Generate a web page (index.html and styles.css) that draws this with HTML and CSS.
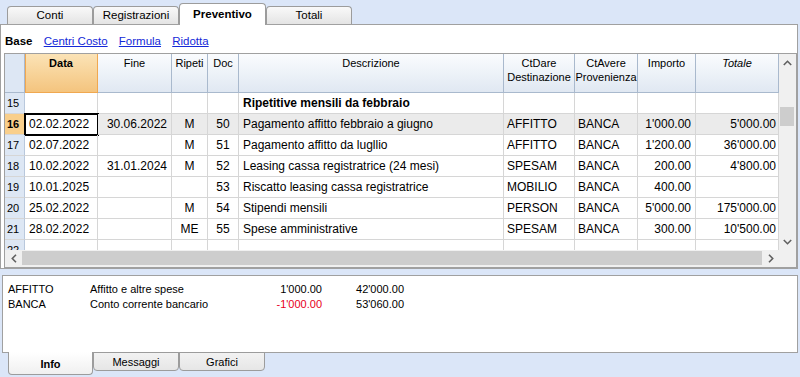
FILE: index.html
```html
<!DOCTYPE html>
<html lang="it">
<head>
    <meta charset="UTF-8">
    <title>Preventivo</title>
    <link rel="stylesheet" href="styles.css">
</head>
<body>

    <div class="top-tabs">
        <div class="tab">Conti</div>
        <div class="tab">Registrazioni</div>
        <div class="tab active">Preventivo</div>
        <div class="tab">Totali</div>
    </div>

    <div class="main">
        <div class="subnav">
            <b>Base</b>
            <a href="#">Centri Costo</a>
            <a href="#">Formula</a>
            <a href="#">Ridotta</a>
        </div>

        <div class="grid">
            <div class="grid-body">
                <div class="viewport">
                    <div class="row head">
                        <div class="c h num"></div>
                        <div class="c h sel-col"><b>Data</b></div>
                        <div class="c h">Fine</div>
                        <div class="c h">Ripeti</div>
                        <div class="c h">Doc</div>
                        <div class="c h">Descrizione</div>
                        <div class="c h">CtDare<br>Destinazione</div>
                        <div class="c h">CtAvere<br>Provenienza</div>
                        <div class="c h">Importo</div>
                        <div class="c h"><i>Totale</i></div>
                    </div>

                    <div class="row">
                        <div class="c num">15</div>
                        <div class="c"></div>
                        <div class="c"></div>
                        <div class="c"></div>
                        <div class="c"></div>
                        <div class="c"><b>Ripetitive mensili da febbraio</b></div>
                        <div class="c"></div>
                        <div class="c"></div>
                        <div class="c"></div>
                        <div class="c"></div>
                    </div>

                    <div class="row sel">
                        <div class="c num">16</div>
                        <div class="c cur">02.02.2022</div>
                        <div class="c right">30.06.2022</div>
                        <div class="c mid">M</div>
                        <div class="c mid">50</div>
                        <div class="c">Pagamento affitto febbraio a giugno</div>
                        <div class="c acc">AFFITTO</div>
                        <div class="c acc">BANCA</div>
                        <div class="c right">1'000.00</div>
                        <div class="c right tot">5'000.00</div>
                    </div>

                    <div class="row">
                        <div class="c num">17</div>
                        <div class="c">02.07.2022</div>
                        <div class="c right"></div>
                        <div class="c mid">M</div>
                        <div class="c mid">51</div>
                        <div class="c">Pagamento affitto da lugllio</div>
                        <div class="c acc">AFFITTO</div>
                        <div class="c acc">BANCA</div>
                        <div class="c right">1'200.00</div>
                        <div class="c right tot">36'000.00</div>
                    </div>

                    <div class="row">
                        <div class="c num">18</div>
                        <div class="c">10.02.2022</div>
                        <div class="c right">31.01.2024</div>
                        <div class="c mid">M</div>
                        <div class="c mid">52</div>
                        <div class="c">Leasing cassa registratrice (24 mesi)</div>
                        <div class="c acc">SPESAM</div>
                        <div class="c acc">BANCA</div>
                        <div class="c right">200.00</div>
                        <div class="c right tot">4'800.00</div>
                    </div>

                    <div class="row">
                        <div class="c num">19</div>
                        <div class="c">10.01.2025</div>
                        <div class="c right"></div>
                        <div class="c mid"></div>
                        <div class="c mid">53</div>
                        <div class="c">Riscatto leasing cassa registratrice</div>
                        <div class="c acc">MOBILIO</div>
                        <div class="c acc">BANCA</div>
                        <div class="c right">400.00</div>
                        <div class="c right tot"></div>
                    </div>

                    <div class="row">
                        <div class="c num">20</div>
                        <div class="c">25.02.2022</div>
                        <div class="c right"></div>
                        <div class="c mid">M</div>
                        <div class="c mid">54</div>
                        <div class="c">Stipendi mensili</div>
                        <div class="c acc">PERSON</div>
                        <div class="c acc">BANCA</div>
                        <div class="c right">5'000.00</div>
                        <div class="c right tot">175'000.00</div>
                    </div>

                    <div class="row">
                        <div class="c num">21</div>
                        <div class="c">28.02.2022</div>
                        <div class="c right"></div>
                        <div class="c mid">ME</div>
                        <div class="c mid">55</div>
                        <div class="c">Spese amministrative</div>
                        <div class="c acc">SPESAM</div>
                        <div class="c acc">BANCA</div>
                        <div class="c right">300.00</div>
                        <div class="c right tot">10'500.00</div>
                    </div>

                    <div class="row">
                        <div class="c num">22</div>
                        <div class="c"></div>
                        <div class="c"></div>
                        <div class="c"></div>
                        <div class="c"></div>
                        <div class="c"></div>
                        <div class="c"></div>
                        <div class="c"></div>
                        <div class="c"></div>
                        <div class="c"></div>
                    </div>
                </div>

                <!-- vertical scrollbar -->
                <div class="vscroll">
                    <div class="sbtn">
                        <svg width="9" height="6" viewBox="0 0 9 6"><polyline points="0.8,5 4.5,1.3 8.2,5" fill="none" stroke="#606060" stroke-width="1.6"/></svg>
                    </div>
                    <div class="vthumb"></div>
                    <div class="spacer"></div>
                    <div class="sbtn">
                        <svg width="9" height="6" viewBox="0 0 9 6"><polyline points="0.8,1 4.5,4.7 8.2,1" fill="none" stroke="#606060" stroke-width="1.6"/></svg>
                    </div>
                </div>
            </div>

            <!-- horizontal scrollbar -->
            <div class="hscroll">
                <div class="sbtn">
                    <svg width="6" height="9" viewBox="0 0 6 9"><polyline points="5,0.8 1.3,4.5 5,8.2" fill="none" stroke="#606060" stroke-width="1.6"/></svg>
                </div>
                <div class="hthumb"></div>
                <div class="sbtn">
                    <svg width="6" height="9" viewBox="0 0 6 9"><polyline points="1,0.8 4.7,4.5 1,8.2" fill="none" stroke="#606060" stroke-width="1.6"/></svg>
                </div>
                <div class="corner"></div>
            </div>
        </div>
    </div>

    <div class="info">
        <div class="info-row">
            <span>AFFITTO</span>
            <span>Affitto e altre spese</span>
            <span class="amt">1'000.00</span>
            <span class="amt">42'000.00</span>
        </div>
        <div class="info-row">
            <span>BANCA</span>
            <span>Conto corrente bancario</span>
            <span class="amt neg">-1'000.00</span>
            <span class="amt">53'060.00</span>
        </div>
    </div>

    <div class="bottom-tabs">
        <div class="btab active">Info</div>
        <div class="btab">Messaggi</div>
        <div class="btab">Grafici</div>
    </div>

</body>
</html>
```

FILE: styles.css
```css
body {
    margin: 0;
    width: 800px;
    height: 377px;
    overflow: hidden;
    background: #dbe6f8;
    font-family: "Liberation Sans", Arial, sans-serif;
    font-size: 11px;
    color: #000;
}

/* top tabs */
.top-tabs {
    display: flex;
    align-items: flex-end;
    height: 24px;
    padding-left: 7px;
}

.tab {
    box-sizing: border-box;
    width: 86px;
    height: 18px;
    border: 1px solid #9c9c9c;
    border-bottom: none;
    border-radius: 4px 4px 0 0;
    background: linear-gradient(#f9f9f9, #e4e4e4);
    text-align: center;
    line-height: 17px;
    font-size: 11.5px;
}

.tab.active {
    width: 87px;
    height: 22px;
    margin-bottom: -1px;
    position: relative;
    z-index: 1;
    background: #fff;
    font-weight: bold;
    line-height: 20px;
}

/* main panel */
.main {
    box-sizing: border-box;
    width: 798px;
    height: 245px;
    border: 1px solid #a0a0a0;
    background: #fff;
}

.subnav {
    box-sizing: border-box;
    height: 28px;
    padding: 10px 0 0 4px;
    line-height: 13px;
    font-size: 11.5px;
}

.subnav a {
    color: #1428d8;
    margin-left: 8px;
}

/* grid */
.grid {
    box-sizing: border-box;
    width: 793px;
    height: 215px;
    margin-left: 3px;
    border: 1px solid #a0a0a0;
}

.grid-body {
    display: flex;
    height: 196px;
}

.viewport {
    width: 774px;
    overflow: hidden;
}

.row {
    display: grid;
    grid-template-columns: 20px 73px 74px 36px 31px 265px 71px 63px 58px 83px;
    height: 21px;
}

.row.head {
    height: 39px;
}

.c {
    box-sizing: border-box;
    border-right: 1px solid #d6d6d6;
    border-bottom: 1px solid #d6d6d6;
    padding: 0 4px;
    white-space: nowrap;
    overflow: hidden;
    font-size: 12px;
    line-height: 20px;
}

.c.h {
    background: linear-gradient(#fafcfe, #e0e8f2);
    border-right-color: #a9b9cd;
    border-bottom-color: #a9b9cd;
    text-align: center;
    font-size: 11px;
    line-height: 14px;
    padding: 2px 0 0;
}

.c.h.sel-col {
    background: linear-gradient(#fbe3b6, #f4c47e);
    border-right-color: #f0a850;
    border-bottom-color: #f0a850;
    box-shadow: inset 1px 0 0 #f0a850;
}

.c.num {
    background: #dde7f4;
    border-right-color: #b9c8dc;
    font-size: 11px;
    padding: 0 0 0 2px;
}

.c.h.num {
    border-right-color: #a9b9cd;
    background: #dde7f4;
}

.c.right {
    text-align: right;
}

.c.tot {
    padding-right: 2px;
}

.c.mid {
    text-align: center;
    padding: 0;
}

.c.acc {
    padding-left: 3px;
}

.row.sel .c {
    background: #ebebeb;
}

.row.sel .c.num {
    background: #f9cf8b;
    font-weight: bold;
}

.row.sel .c.cur {
    background: #fff;
    outline: 2px solid #000;
    outline-offset: -1px;
}

/* scrollbars */
.vscroll {
    width: 17px;
    background: #f0f0f0;
    display: flex;
    flex-direction: column;
}

.sbtn {
    width: 17px;
    height: 17px;
    display: flex;
    align-items: center;
    justify-content: center;
    flex-shrink: 0;
}

.vthumb {
    height: 19px;
    margin: 36px 2px 0 1px;
    background: #cdcdcd;
}

.spacer {
    flex: 1;
}

.hscroll {
    display: flex;
    height: 17px;
    background: #f0f0f0;
}

.hthumb {
    flex: 1;
    margin: 1px 0 2px;
    background: #cdcdcd;
}

.corner {
    width: 17px;
}

/* info panel */
.info {
    box-sizing: border-box;
    width: 796px;
    height: 78px;
    margin: 6px 0 0 2px;
    padding: 6px 0 0 5px;
    border: 1px solid #a0a0a0;
    background: #fff;
}

.info-row {
    display: grid;
    grid-template-columns: 82px 165px 67px 82px;
    line-height: 15px;
}

.info-row .amt {
    text-align: right;
}

.info-row .neg {
    color: #e8001c;
}

/* bottom tabs */
.bottom-tabs {
    display: flex;
    padding-left: 8px;
    margin-top: -1px;
}

.btab {
    box-sizing: border-box;
    width: 86px;
    height: 19px;
    border: 1px solid #9c9c9c;
    border-radius: 0 0 4px 4px;
    background: linear-gradient(#f2f2f2, #e6e6e6);
    text-align: center;
    line-height: 18px;
}

.btab.active {
    width: 85px;
    height: 23px;
    border-top: none;
    background: linear-gradient(#fff, #f0f0f0);
    font-weight: bold;
    line-height: 24px;
}
```
